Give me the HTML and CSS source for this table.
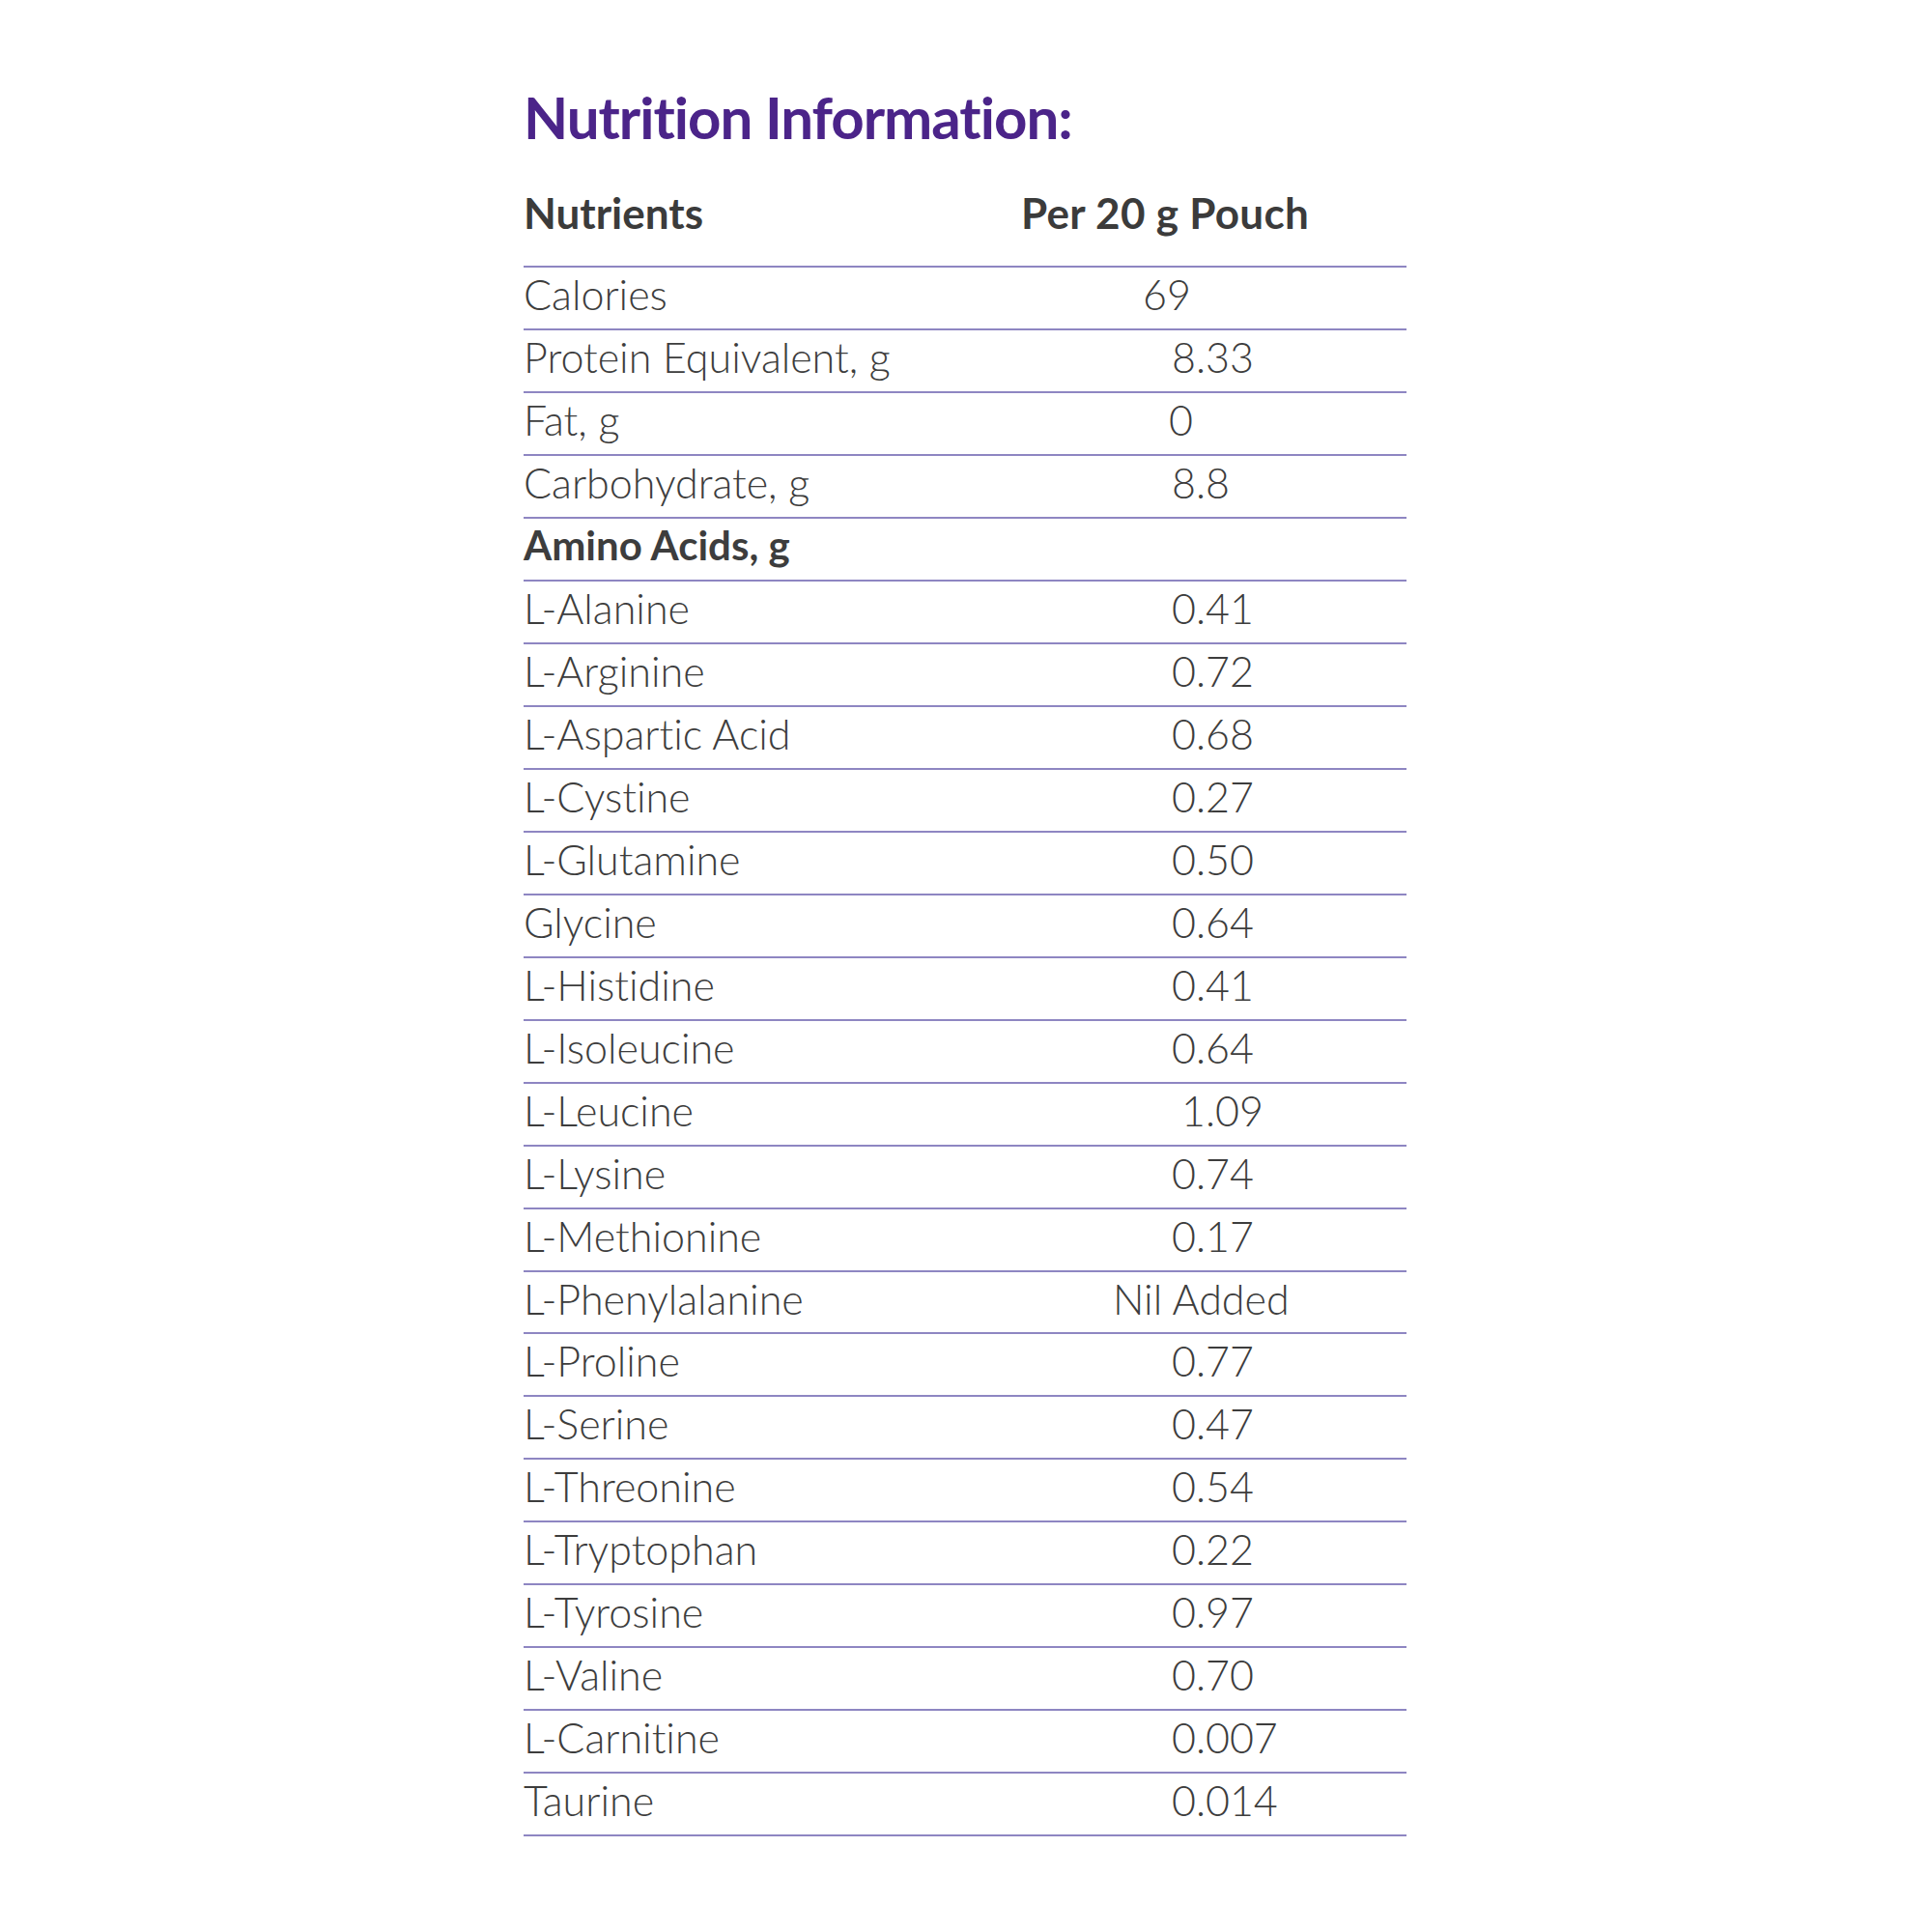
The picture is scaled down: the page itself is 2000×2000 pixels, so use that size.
FILE: index.html
```html
<!DOCTYPE html>
<html lang="en">
<head>
<meta charset="utf-8">
<title>Nutrition Information</title>
<link rel="stylesheet" href="styles.css">
</head>
<body>
<main class="page">
  <h1 class="title">Nutrition Information:</h1>
  <div class="table">
    <div class="head">
      <span class="h-name">Nutrients</span>
      <span class="h-val">Per 20 g Pouch</span>
    </div>
    <div class="row"><span class="n">Calories</span><span class="v v-69">69</span></div>
    <div class="row"><span class="n">Protein Equivalent, g</span><span class="v">8.33</span></div>
    <div class="row"><span class="n">Fat, g</span><span class="v v-0">0</span></div>
    <div class="row"><span class="n">Carbohydrate, g</span><span class="v">8.8</span></div>
    <div class="row"><span class="n sub">Amino Acids, g</span><span class="v"></span></div>
    <div class="row"><span class="n">L-Alanine</span><span class="v">0.41</span></div>
    <div class="row"><span class="n">L-Arginine</span><span class="v">0.72</span></div>
    <div class="row"><span class="n">L-Aspartic Acid</span><span class="v">0.68</span></div>
    <div class="row"><span class="n">L-Cystine</span><span class="v">0.27</span></div>
    <div class="row"><span class="n">L-Glutamine</span><span class="v">0.50</span></div>
    <div class="row"><span class="n">Glycine</span><span class="v">0.64</span></div>
    <div class="row"><span class="n">L-Histidine</span><span class="v">0.41</span></div>
    <div class="row"><span class="n">L-Isoleucine</span><span class="v">0.64</span></div>
    <div class="row"><span class="n">L-Leucine</span><span class="v v-109">1.09</span></div>
    <div class="row"><span class="n">L-Lysine</span><span class="v">0.74</span></div>
    <div class="row"><span class="n">L-Methionine</span><span class="v">0.17</span></div>
    <div class="row"><span class="n">L-Phenylalanine</span><span class="v v-nil">Nil Added</span></div>
    <div class="row"><span class="n">L-Proline</span><span class="v">0.77</span></div>
    <div class="row"><span class="n">L-Serine</span><span class="v">0.47</span></div>
    <div class="row"><span class="n">L-Threonine</span><span class="v">0.54</span></div>
    <div class="row"><span class="n">L-Tryptophan</span><span class="v">0.22</span></div>
    <div class="row"><span class="n">L-Tyrosine</span><span class="v">0.97</span></div>
    <div class="row"><span class="n">L-Valine</span><span class="v">0.70</span></div>
    <div class="row"><span class="n">L-Carnitine</span><span class="v">0.007</span></div>
    <div class="row"><span class="n">Taurine</span><span class="v">0.014</span></div>
  </div>
</main>
</body>
</html>
```

FILE: styles.css
```css
html, body {
  margin: 0;
  padding: 0;
  background: #ffffff;
}

.page {
  padding: 91px 0 0 542px;
  font-family: Lato, "Open Sans", sans-serif;
  font-variant-ligatures: none;
  color: #3d3d3d;
}

.title {
  margin: 0 0 44px 0;
  font-size: 60px;
  line-height: 60px;
  font-weight: 700;
  color: #4b2489;
  letter-spacing: -1px;
}

.table {
  width: 914px;
}

.head {
  display: grid;
  grid-template-columns: 515px 1fr;
  font-size: 44px;
  line-height: 50px;
  font-weight: 700;
  color: #3b3b3b;
  padding-bottom: 30px;
  border-bottom: 2px solid #8e86c2;
}

.h-val {
  letter-spacing: 0.3px;
}

.row {
  display: grid;
  grid-template-columns: 671px 1fr;
  height: 55px;
  padding-bottom: 8px;
  font-size: 43px;
  line-height: 55px;
  font-weight: 300;
  border-bottom: 2px solid #8e86c2;
  white-space: nowrap;
}

.row:nth-child(n+14) {
  height: 54.9px;
}

.n.sub {
  font-weight: 700;
  font-size: 42px;
}

.v-69 {
  margin-left: -30px;
}

.v-0 {
  margin-left: -3px;
}

.v-109 {
  margin-left: 10px;
}

.v-nil {
  margin-left: -61px;
}
```
